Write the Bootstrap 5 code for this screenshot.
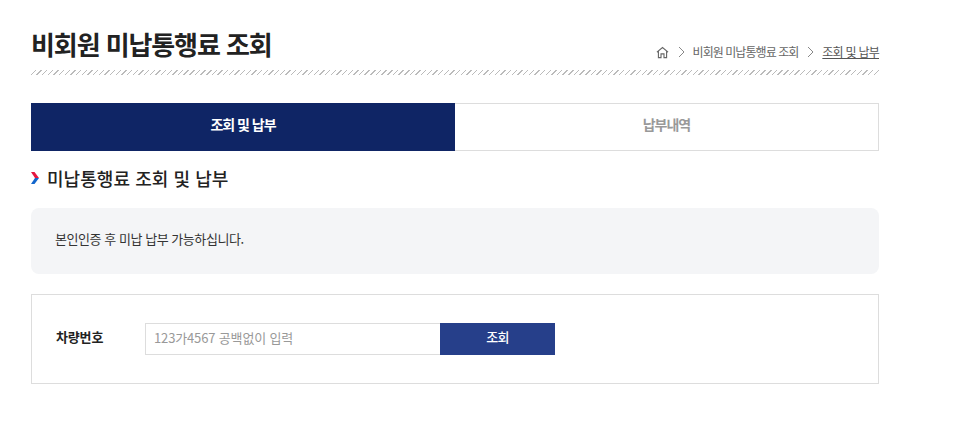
<!DOCTYPE html>
<html lang="ko">
<head>
<meta charset="utf-8">
<link href="https://cdn.jsdelivr.net/npm/bootstrap@5.3.0/dist/css/bootstrap.min.css" rel="stylesheet">
<style>
html,body{background:#fff;overflow:hidden}
body{font-family:"Noto Sans CJK KR","Noto Sans",sans-serif;color:#222}
.pg-wrap{width:848px;margin-left:31px;padding-top:24px}
.pg-head{height:51px;padding-bottom:6px;background:repeating-linear-gradient(135deg,transparent 0,transparent 3px,#bbb 3px,#bbb 4px) left bottom/100% 5px no-repeat}
.pg-title{font-size:26px;font-weight:700;line-height:40px;letter-spacing:-1.1px;margin:0;color:#222}
.crumbs{font-size:12px;color:#666;line-height:18px;padding-top:19px;letter-spacing:-.75px}
.crumbs span{letter-spacing:-.95px}
.crumbs u{color:#555}
.tabs-row{margin-top:28px;height:48px}
.tab-on,.tab-off{width:424px;height:48px;font-size:14px;font-weight:700;letter-spacing:-1px;padding-bottom:6px}
.tab-on{background:#0f2565;color:#fff}
.tab-off{background:#fff;color:#999;border:1px solid #ddd;border-left:0}
.sec-title{font-size:18px;font-weight:500;line-height:26px;margin:14px 0 0;letter-spacing:.05px;color:#222}
.notice{background:#f4f5f7;border-radius:8px;height:66px;margin-top:17px;padding:0 0 4px 24px;font-size:13px;letter-spacing:-.45px;color:#333}
.search-box{border:1px solid #ddd;height:90px;margin-top:20px;padding-left:24px}
.lbl{width:89px;font-size:13px;font-weight:700;letter-spacing:-.15px;color:#222;padding-bottom:4px}
.car-in{width:295px;height:32px;border:1px solid #ddd;border-right:0;padding:0 8px 3px;font-size:13px;font-family:inherit;outline:0;letter-spacing:-.15px}
.car-in::placeholder{color:#999;opacity:1}
.go-btn{width:115px;height:32px;background:#263f8a;color:#fff;border:0;border-radius:0;font-size:13px;font-weight:500;padding:0 0 5px;letter-spacing:-.6px}
.go-btn:hover{background:#263f8a;color:#fff}
.sep{margin:0 8px 0 9px}
</style>
</head>
<body>
<div class="pg-wrap">
  <div class="pg-head d-flex justify-content-between align-items-start">
    <h1 class="pg-title">비회원 미납통행료 조회</h1>
    <div class="crumbs d-flex align-items-center">
      <svg width="13" height="13" viewBox="0 0 14 14" fill="none" stroke="#666" stroke-width="1.2"><path d="M1 6.6 7 1.6l6 5M2.6 5.6V12.5H5.4V8.5H8.6V12.5H11.4V5.6"/></svg>
      <svg class="sep" width="7" height="12" viewBox="0 0 7 12" fill="none" stroke="#888"><path d="M1 1l5 5-5 5"/></svg>
      <span>비회원 미납통행료 조회</span>
      <svg class="sep" width="7" height="12" viewBox="0 0 7 12" fill="none" stroke="#888"><path d="M1 1l5 5-5 5"/></svg>
      <u>조회 및 납부</u>
    </div>
  </div>
  <div class="tabs-row d-flex">
    <div class="tab-on d-flex align-items-center justify-content-center">조회 및 납부</div>
    <div class="tab-off d-flex align-items-center justify-content-center">납부내역</div>
  </div>
  <h2 class="sec-title d-flex align-items-center gap-2">
    <svg width="8" height="12" viewBox="0 0 8 12"><path d="M0 0H3.5L8 6H4Z" fill="#e5173f"/><path d="M0 12H3.5L8 6H4Z" fill="#1266cc"/></svg>
    <span>미납통행료 조회 및 납부</span>
  </h2>
  <div class="notice d-flex align-items-center">본인인증 후 미납 납부 가능하십니다.</div>
  <div class="search-box d-flex align-items-center">
    <label class="lbl" for="car">차량번호</label>
    <input id="car" class="car-in" placeholder="123가4567 공백없이 입력">
    <button class="btn go-btn" type="button">조회</button>
  </div>
</div>
<script src="https://cdn.jsdelivr.net/npm/bootstrap@5.3.0/dist/js/bootstrap.bundle.min.js"></script>
</body>
</html>
